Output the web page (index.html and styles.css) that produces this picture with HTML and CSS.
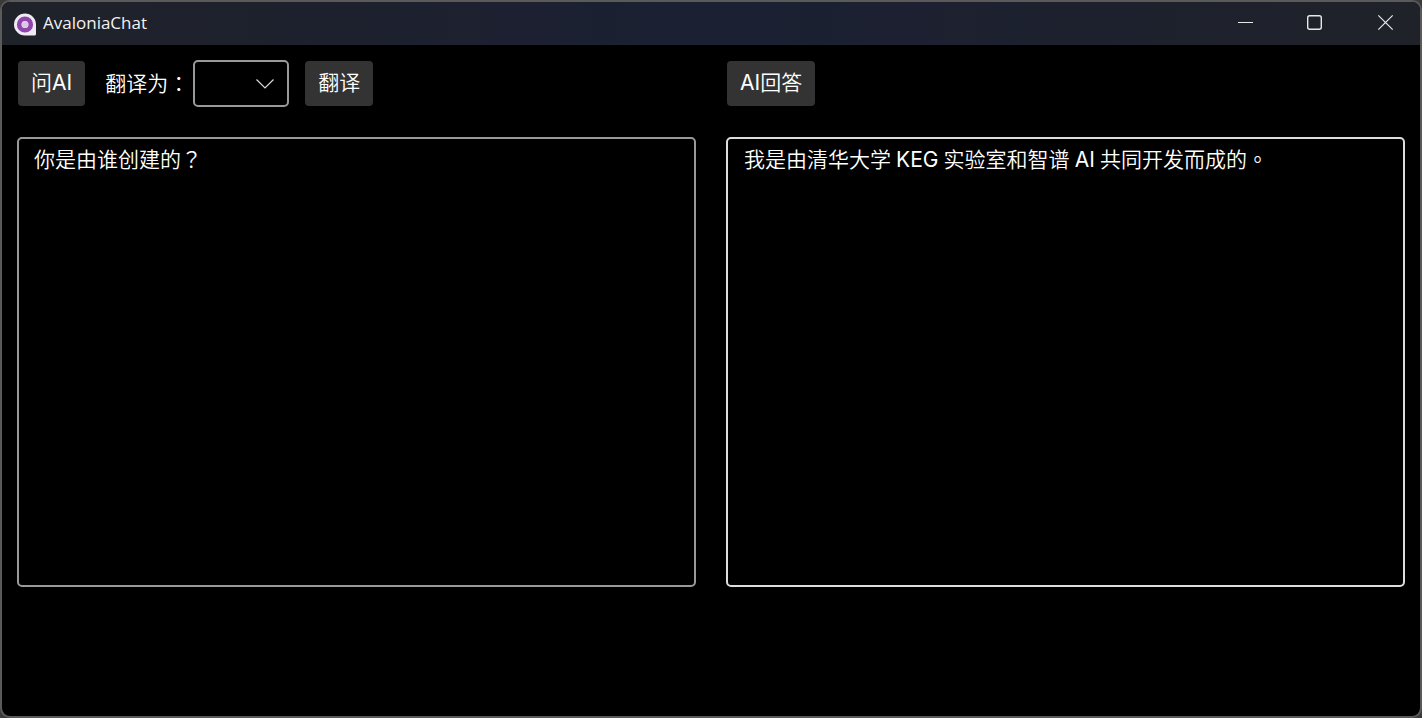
FILE: index.html
```html
<!DOCTYPE html>
<html lang="zh-CN">
<head>
<meta charset="utf-8">
<title>AvaloniaChat</title>
<link rel="stylesheet" href="styles.css">
</head>
<body>
<div class="window">
  <header class="titlebar">
    <svg class="logo" width="24" height="23" viewBox="0 0 24 23">
      <path d="M12 0.500a11 11 0 1 0 0 22h9.500a1.500 1.500 0 0 0 1.500-1.500V11.500A11 11 0 0 0 12 0.500z" fill="#efeaf2"/>
      <circle cx="12" cy="11.500" r="5.800" fill="none" stroke="#8f45ab" stroke-width="4.600"/>
      <circle cx="12" cy="11.500" r="3.200" fill="#dcc8e4"/>
    </svg>
    <span class="app-title">AvaloniaChat</span>
    <div class="caption-buttons">
      <svg class="cap" width="46" height="43" viewBox="0 0 46 43"><path d="M16 20.500h15" stroke="#e8e8e8" stroke-width="1" fill="none"/></svg>
      <svg class="cap" width="46" height="43" viewBox="0 0 46 43"><rect x="15.700" y="13.700" width="13.600" height="13.600" rx="2" stroke="#e8e8e8" stroke-width="1.400" fill="none"/></svg>
      <svg class="cap" width="46" height="43" viewBox="0 0 46 43"><path d="M16.300 13.300l14.400 14.400M30.700 13.300l-14.400 14.400" stroke="#e8e8e8" stroke-width="1.200" fill="none"/></svg>
    </div>
  </header>
  <main class="content">
    <section class="pane">
      <div class="toolbar">
        <button class="btn">问<span class="latin">AI</span></button>
        <span class="label">翻译为<span class="punct" lang="zh-TW">：</span></span>
        <div class="select">
          <svg width="18" height="10" viewBox="0 0 18 10"><path d="M0.500 0.500L9 9L17.500 0.500" stroke="#d8d8d8" stroke-width="1.200" fill="none"/></svg>
        </div>
        <button class="btn">翻译</button>
      </div>
      <div class="textbox">你是由谁创建的<span class="punct" lang="zh-TW">？</span></div>
    </section>
    <section class="pane">
      <div class="toolbar">
        <button class="btn"><span class="latin">AI</span>回答</button>
      </div>
      <div class="textbox textbox-active">我是由清华大学 <span class="latin">KEG</span> 实验室和智谱 <span class="latin">AI</span> 共同开发而成的<span class="punct" lang="zh-TW">。</span></div>
    </section>
  </main>
</div>
</body>
</html>
```
FILE: styles.css
```css
* { box-sizing: border-box; }
html, body { margin: 0; height: 100%; background: #3a3a3a; overflow: hidden; }
.window {
  height: 718px;
  width: 1422px;
  background: #000;
  border: 2px solid #5a5a5a;
  border-radius: 10px;
  overflow: hidden;
  display: flex;
  flex-direction: column;
  color: #fff;
  font-family: "Inter", "Noto Sans CJK SC", sans-serif;
  font-weight: 350;
}
.titlebar {
  height: 43px;
  flex: none;
  display: flex;
  align-items: center;
  padding-left: 11px;
  background: linear-gradient(90deg, #1f2229 0%, #1b2033 50%, #1f2229 100%);
}
.logo { flex: none; margin-top: 1px; }
.app-title {
  margin-left: 6px;
  font-family: "Open Sans", sans-serif;
  font-size: 17px;
  font-weight: 400;
  line-height: 23px;
  margin-top: -2px;
  color: #f2f2f2;
}
.caption-buttons { margin-left: auto; display: flex; gap: 24px; margin-right: 12px; }
.cap { display: block; }
.content {
  flex: 1;
  display: grid;
  grid-template-columns: 679px 679px;
  column-gap: 30px;
  padding: 15px 0 0 15px;
  align-content: start;
}
.toolbar {
  display: flex;
  align-items: center;
  height: 47px;
  gap: 16px;
  padding-left: 1px;
}
.btn {
  height: 45px;
  padding: 0 13px 5px;
  border: 0;
  border-radius: 4px;
  background: #333;
  color: #fff;
  font: 350 21px "Inter", "Noto Sans CJK SC", sans-serif;
}
.latin { font-weight: 400; }
.label { font-size: 21px; margin-left: 4px; margin-right: -12px; margin-top: -3px; white-space: nowrap; }
.punct { font-family: "Noto Sans CJK TC", sans-serif; }
.select {
  width: 96px;
  height: 47px;
  border: 2px solid #999;
  border-radius: 5px;
  display: flex;
  align-items: center;
  justify-content: flex-end;
  padding-right: 13px;
}
.textbox {
  margin-top: 30px;
  height: 450px;
  border: 2px solid #999;
  border-radius: 5px;
  padding: 5px 15px;
  font-size: 21px;
  line-height: 28px;
  word-spacing: -0.8px;
  white-space: pre-wrap;
}
.textbox-active { border-color: #ddd; padding-left: 16px; }
```
